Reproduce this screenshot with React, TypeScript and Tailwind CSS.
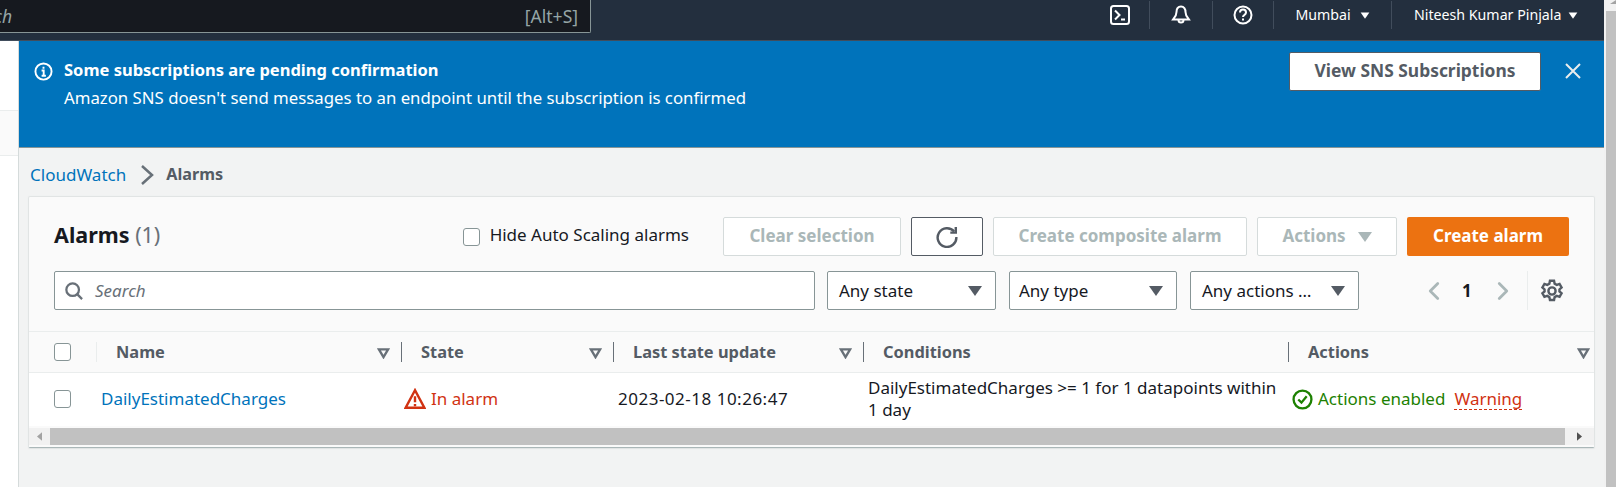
import { ChevronLeft, ChevronRight } from "lucide-react";

function Caret({ className = "" }: { className?: string }) {
  return (
    <svg viewBox="0 0 16 12" className={`h-[12px] w-[16px] ${className}`}>
      <path d="M1 1h14L8 11z" fill="currentColor" />
    </svg>
  );
}

function SortCaret() {
  return (
    <svg viewBox="0 0 14 12" className="mt-[3px] h-[11px] w-[13px] text-[#687078]">
      <path d="M2 1.500h10L7 10z" fill="none" stroke="currentColor" strokeWidth="2.500" />
    </svg>
  );
}

function Checkbox() {
  return <span className="block h-[18px] w-[17px] rounded-[3px] border border-[#879596] bg-white" />;
}

function NavCell({ width, children }: { width: string; children: React.ReactNode }) {
  return <div className={`flex h-[28px] items-center justify-center border-r border-[#414d5c] ${width}`}>{children}</div>;
}

function FilterSelect({ label, width, pl = "pl-[11px]" }: { label: string; width: string; pl?: string }) {
  return (
    <div className={`flex h-[39px] items-center justify-between rounded-[2px] border border-[#879596] bg-white pr-[12px] ${pl} ${width}`}>
      <span className="text-[17px] text-[#16191f]">{label}</span>
      <Caret className="text-[#545b64]" />
    </div>
  );
}

function DisabledButton({ label, width }: { label: string; width: string }) {
  return (
    <div className={`flex h-[39px] items-center justify-center rounded-[2px] border border-[#d5dbdb] bg-white pb-[2px] text-[17px] font-bold text-[#aab7b8] ${width}`}>
      {label}
    </div>
  );
}

function HeaderCell({ label, width, caret = true }: { label: string; width: string; caret?: boolean }) {
  return (
    <div className={`flex h-[20px] items-center justify-between border-r border-[#687078] pr-[11px] pl-[19px] ${width}`}>
      <span className="text-[16.4px] font-bold text-[#545b64]">{label}</span>
      {caret && <SortCaret />}
    </div>
  );
}

export default function App() {
  return (
    <div className="flex h-[487px] w-[1616px] overflow-hidden bg-[#f2f3f3] font-['Noto_Sans',sans-serif]">
      <div className="flex w-[1604px] flex-col">
        {/* top nav */}
        <div className="flex h-[41px] shrink-0 items-start border-b border-[#414d5c] bg-[#232f3e]">
          <div className="flex h-[33px] w-[591px] items-center justify-between overflow-hidden rounded-br-[2px] border-r border-b border-[#879596] bg-[#16191f] pr-[12px] text-[17.500px] text-[#95a5a6]">
            <span className="-ml-[40px] italic">Search</span>
            <span>[Alt+S]</span>
          </div>
          <div className="ml-auto flex h-[30px] items-center text-[14.200px] text-white">
            <NavCell width="w-[60px]">
              <svg viewBox="0 0 20 20" className="h-[20px] w-[20px]" fill="none" stroke="white" strokeWidth="2">
                <rect x="1" y="1" width="18" height="18" rx="2.500" />
                <path d="M5 5.500 9.500 10 5 14.500M11 14.500h4" />
              </svg>
            </NavCell>
            <NavCell width="w-[63px]">
              <svg viewBox="0 0 20 20" className="h-[20px] w-[20px]" fill="none" stroke="white" strokeWidth="2">
                <path d="M10 1.500c-3 0-4.500 2.400-4.500 5.500 0 4-2.500 6-3.500 7.500h16c-1-1.500-3.500-3.500-3.500-7.500 0-3.100-1.500-5.500-4.500-5.500z" />
                <path d="M7.500 15a2.500 2.500 0 0 0 5 0" />
              </svg>
            </NavCell>
            <NavCell width="w-[61px]">
              <svg viewBox="0 0 20 20" className="h-[20px] w-[20px]" fill="none" stroke="white" strokeWidth="2">
                <circle cx="10" cy="10" r="8.500" />
                <path d="M7 7.500c0-4 6-4 6 0 0 2.500-3 2.500-3 4.500" />
                <path d="M10 13.500v2" />
              </svg>
            </NavCell>
            <NavCell width="w-[118px]">
              <span>Mumbai</span>
              <Caret className="ml-[9px] h-[9px]! w-[10px]! text-white" />
            </NavCell>
            <div className="flex h-[28px] w-[212px] items-center pl-[22px]">
              <span>Niteesh Kumar Pinjala</span>
              <Caret className="ml-[7px] h-[9px]! w-[10px]! text-white" />
            </div>
          </div>
        </div>

        <div className="flex flex-1">
          {/* collapsed left panel */}
          <div className="flex w-[19px] shrink-0 flex-col overflow-hidden border-r border-[#d5dbdb] bg-white">
            <div className="h-[70px] shrink-0 border-b border-[#eaeded]" />
            <div className="h-[45px] shrink-0 border-b border-[#eaeded] bg-[#fafafa]" />
            <div className="mt-[69px] -ml-[8px] text-[14px] text-[#545b64]">0</div>
          </div>

          <div className="flex flex-1 flex-col">
            {/* flash banner */}
            <div className="flex h-[107px] shrink-0 border-b border-[#879596] bg-[#0073bb] pr-[23px] pl-[15px] text-white">
              <svg viewBox="0 0 20 20" className="mt-[21px] h-[19px] w-[19px] shrink-0" fill="none" stroke="white" strokeWidth="2">
                <circle cx="10" cy="10" r="8.500" />
                <path d="M8 9h2.200v5M8 14.500h4.500M10 5v2" />
              </svg>
              <div className="mt-[15px] ml-[11px] flex-1">
                <div className="text-[16.500px] leading-[28px] font-bold">Some subscriptions are pending confirmation</div>
                <div className="text-[16.800px] leading-[28px]">Amazon SNS doesn't send messages to an endpoint until the subscription is confirmed</div>
              </div>
              <div className="mt-[11px] flex h-[39px] w-[252px] items-center justify-center rounded-[2px] border border-[#545b64] bg-white pb-[2px] text-[17.400px] font-bold text-[#545b64]">
                View SNS Subscriptions
              </div>
              <svg viewBox="0 0 16 16" className="mt-[22px] ml-[24px] h-[16px] w-[16px]" fill="none" stroke="#eaeded" strokeWidth="2">
                <path d="M1 1l14 14M15 1 1 15" />
              </svg>
            </div>

            {/* breadcrumb */}
            <div className="flex h-[49px] shrink-0 items-center pt-[4px] pl-[11px] text-[17px]">
              <span className="text-[#0073bb]">CloudWatch</span>
              <svg viewBox="0 0 14 20" className="mr-[12px] ml-[14px] h-[20px] w-[14px]" fill="none" stroke="#687078" strokeWidth="2.500">
                <path d="M2 1 12 10 2 19" />
              </svg>
              <span className="text-[16.200px] font-bold text-[#545b64]">Alarms</span>
            </div>

            {/* alarms card */}
            <div className="mr-[10px] ml-[10px] flex h-[251px] flex-col rounded-[1px] border-b border-[#aab7b8] bg-[#fafafa] shadow-[0_0_1px_1px_#dfe3e3]">
              <div className="flex h-[135px] shrink-0 flex-col gap-[15px] border-b border-[#eaeded] pt-[20px] pr-[25px] pl-[25px]">
                <div className="flex items-center">
                  <h2 className="-mt-[2px] text-[21.500px] font-bold text-[#16191f]">
                    Alarms <span className="font-normal text-[#687078]">(1)</span>
                  </h2>
                  <div className="ml-auto flex items-center">
                    <Checkbox />
                    <span className="mr-[34px] ml-[10px] pb-[3px] text-[17px] text-[#16191f]">Hide Auto Scaling alarms</span>
                    <div className="flex items-center gap-[10px]">
                      <DisabledButton label="Clear selection" width="w-[178px]" />
                      <div className="flex h-[39px] w-[72px] items-center justify-center rounded-[2px] border border-[#545b64] bg-white">
                        <svg viewBox="0 0 20 20" className="h-[22px] w-[22px]" fill="none" stroke="#545b64" strokeWidth="2.200">
                          <path d="M16.500 5A8.500 8.500 0 1 0 18.500 10" />
                          <path d="M18 1v5h-5" />
                        </svg>
                      </div>
                      <DisabledButton label="Create composite alarm" width="w-[254px]" />
                      <div className="flex h-[39px] w-[140px] items-center justify-center gap-[11px] rounded-[2px] border border-[#d5dbdb] bg-white pb-[2px] pl-[1px] text-[17px] font-bold text-[#aab7b8]">
                        Actions <Caret className="mt-[2px]" />
                      </div>
                      <div className="flex h-[39px] w-[162px] items-center justify-center rounded-[2px] bg-[#ec7211] pb-[2px] text-[17px] font-bold text-white">
                        Create alarm
                      </div>
                    </div>
                  </div>
                </div>
                <div className="flex items-center">
                  <div className="flex h-[39px] w-[761px] items-center rounded-[2px] border border-[#879596] bg-white pl-[10px]">
                    <svg viewBox="0 0 20 20" className="h-[18px] w-[18px]" fill="none" stroke="#687078" strokeWidth="2.500">
                      <circle cx="8.500" cy="8.500" r="7" />
                      <path d="m13.500 13.500 5.500 5.500" />
                    </svg>
                    <span className="ml-[12px] text-[17px] text-[#687078] italic">Search</span>
                  </div>
                  <div className="ml-[12px] flex gap-[13px]">
                    <FilterSelect label="Any state" width="w-[169px]" />
                    <FilterSelect label="Any type" width="w-[168px]" pl="pl-[9px]" />
                    <FilterSelect label="Any actions …" width="w-[169px]" />
                  </div>
                  <div className="ml-[60px] flex items-center text-[#aab7b8]">
                    <ChevronLeft size={30} strokeWidth={2.200} />
                    <span className="mr-[16px] ml-[13px] text-[17px] font-bold text-[#16191f]">1</span>
                    <ChevronRight size={30} strokeWidth={2.200} />
                  </div>
                  <div className="ml-[9px] flex h-[39px] w-[37px] items-center justify-end border-l border-[#eaeded]">
                    <svg viewBox="0 0 20 20" className="h-[24px] w-[24px]" fill="none" stroke="#545b64" strokeWidth="2">
                      <circle cx="10" cy="10" r="3" />
                      <path d="M8.300 1.500h3.400l.5 2.400 1.800 1 2.300-.8 1.700 3-1.800 1.600v1.600l1.800 1.600-1.700 3-2.300-.8-1.800 1-.5 2.400H8.300l-.5-2.400-1.800-1-2.300.8-1.700-3 1.800-1.600V8.700L2 7.100l1.700-3 2.300.8 1.800-1z" />
                    </svg>
                  </div>
                </div>
              </div>

              {/* table header */}
              <div className="flex h-[41px] shrink-0 items-center border-b border-[#eaeded]">
                <div className="flex w-[68px] shrink-0 items-center justify-between pl-[25px]">
                  <Checkbox />
                  <span className="h-[20px] border-r border-[#eaeded]" />
                </div>
                <HeaderCell label="Name" width="w-[305px]" />
                <HeaderCell label="State" width="w-[212px]" />
                <HeaderCell label="Last state update" width="w-[250px]" />
                <HeaderCell label="Conditions" width="w-[425px]" caret={false} />
                <div className="flex flex-1 items-center justify-between pr-[4px] pl-[19px]">
                  <span className="text-[16.400px] font-bold text-[#545b64]">Actions</span>
                  <SortCaret />
                </div>
              </div>

              {/* table row */}
              <div className="flex h-[53px] shrink-0 items-center bg-white pb-[1px] text-[17px] text-[#16191f]">
                <div className="w-[72px] shrink-0 pl-[25px]">
                  <Checkbox />
                </div>
                <span className="w-[303px] text-[#0073bb]">DailyEstimatedCharges</span>
                <div className="flex w-[214px] items-center gap-[5px] text-[#d13212]">
                  <svg viewBox="0 0 20 20" className="h-[22px] w-[22px]" fill="none" stroke="#d13212" strokeWidth="2.200">
                    <path d="M10 2 1.500 18h17z" />
                    <path d="M10 7.500v5.500M10 14.500v2" />
                  </svg>
                  In alarm
                </div>
                <span className="w-[250px] tracking-[0.5px]">2023-02-18 10:26:47</span>
                <span className="w-[424px] pr-[12px] leading-[22px]">DailyEstimatedCharges &gt;= 1 for 1 datapoints within 1 day</span>
                <div className="flex items-center gap-[5px] text-[#1d8102]">
                  <svg viewBox="0 0 20 20" className="h-[21px] w-[21px]" fill="none" stroke="#1d8102" strokeWidth="2.200">
                    <circle cx="10" cy="10" r="8.500" />
                    <path d="m6 10 3 3 5-6" />
                  </svg>
                  Actions enabled
                  <span className="ml-[4px] border-b border-dashed border-[#d13212] leading-[20px] text-[#d13212]">Warning</span>
                </div>
              </div>

              {/* horizontal scrollbar */}
              <div className="mt-[2px] flex h-[17px] shrink-0 items-center bg-[#f1f1f1]">
                <svg viewBox="0 0 6 10" className="ml-[8px] h-[9px] w-[5px] text-[#a3a3a3]"><path d="M6 0v10L0 5z" fill="currentColor" /></svg>
                <div className="ml-[8px] h-full flex-1 bg-[#c1c1c1]" />
                <div className="flex w-[29px] justify-center">
                  <svg viewBox="0 0 6 10" className="h-[9px] w-[5px] text-[#505050]"><path d="M0 0v10l6-5z" fill="currentColor" /></svg>
                </div>
              </div>
            </div>
          </div>
        </div>
      </div>

      {/* page scrollbar */}
      <div className="flex w-[12px] shrink-0 flex-col items-end bg-[#f1f1f1]">
        <svg viewBox="0 0 6 4" className="h-[4px] w-[6px] text-[#a3a3a3]"><path d="M6 0v4H0z" fill="currentColor" /></svg>
        <div className="mt-[7px] w-[10px] flex-1 bg-[#c1c1c1]" />
      </div>
    </div>
  );
}
